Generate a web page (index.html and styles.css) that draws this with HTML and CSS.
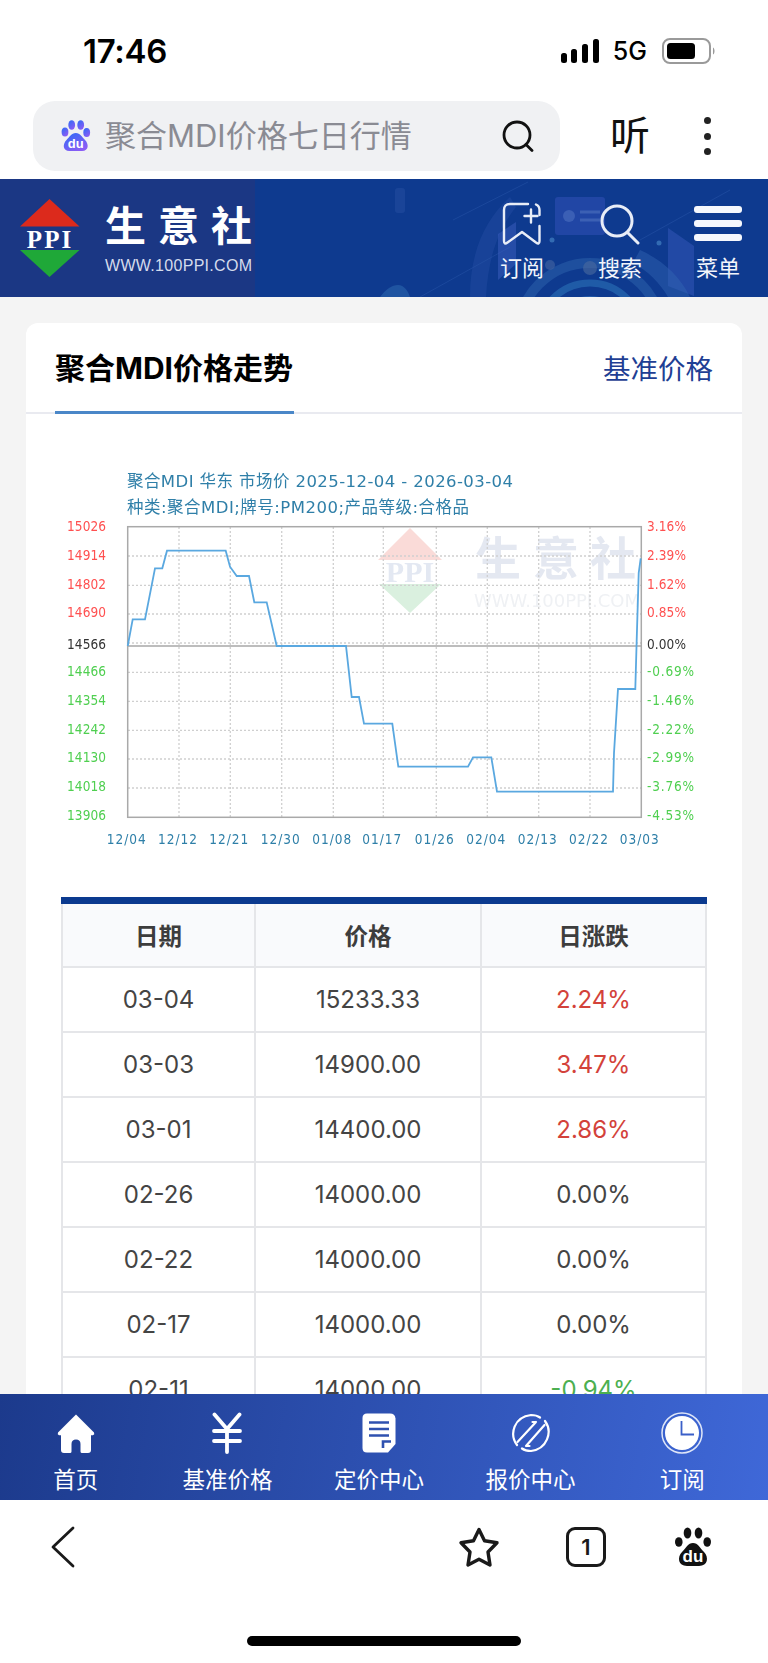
FILE: index.html
```html
<!DOCTYPE html>
<html lang="zh-CN">
<head>
<meta charset="utf-8">
<title>聚合MDI价格走势</title>
<link rel="stylesheet" href="styles.css">
</head>
<body>
<div class="screen">
  <div class="status">
    <span class="time">17:46</span>
    <div class="status-right">
      <svg class="signal" width="38" height="24" viewBox="0 0 38 24"><rect x="0" y="14" width="6" height="10" rx="2.5"/><rect x="10" y="10" width="6" height="14" rx="2.5"/><rect x="21" y="5" width="6" height="19" rx="2.5"/><rect x="32" y="0" width="6" height="24" rx="2.5"/></svg>
      <span class="net">5G</span>
      <svg class="battery" width="54" height="26" viewBox="0 0 54 26"><rect x="1" y="1" width="47" height="24" rx="7" fill="none" stroke="#9a9a9a" stroke-width="2"/><rect x="5" y="5" width="28" height="16" rx="3.5" fill="#000"/><path d="M51 9.500c2 1 2 6 0 7z" fill="#9a9a9a"/></svg>
    </div>
  </div>

  <div class="browser-bar">
    <div class="search-box">
      <svg class="paw" width="30" height="32" viewBox="0 0 30 32">
        <defs><linearGradient id="pawFill" x1="0" y1="0" x2="0.6" y2="1"><stop offset="0" stop-color="#2b6cf6"/><stop offset="1" stop-color="#8a5cf5"/></linearGradient></defs>
        <g fill="url(#pawFill)"><ellipse cx="4" cy="12" rx="3.400" ry="4.500"/><ellipse cx="10.700" cy="5" rx="3.400" ry="4.800"/><ellipse cx="19.700" cy="5" rx="3.400" ry="4.800"/><ellipse cx="25.700" cy="12.500" rx="3.400" ry="4.500"/><path d="M14.800 13c4.500 0 6.200 4 9.200 7 4 4 4 11-3 11H8.500c-7 0-7-7-3-11 3-3 4.800-7 9.300-7z"/></g>
        <text x="14.800" y="28" class="paw-du">du</text>
      </svg>
      <span class="search-text">聚合MDI价格七日行情</span>
      <svg class="search-glass" width="32" height="32" viewBox="0 0 32 32" fill="none" stroke="#111" stroke-width="2.800" stroke-linecap="round"><circle cx="15" cy="15" r="13"/><path d="M24 24.500l6 6"/></svg>
    </div>
    <span class="listen">听</span>
    <div class="dots"><i></i><i></i><i></i></div>
  </div>

  <header class="site-header">
    <svg class="tech" width="388" height="118" viewBox="380 179 388 118" fill="none">
      <rect x="395" y="188" width="10" height="25" rx="3" fill="#2c56a6" opacity=".4"/>
      <path d="M453 220l75-38M420 297l90-50M640 240l90-50" stroke="#2f5cb0" stroke-width="1" opacity=".4"/>
      <rect x="555" y="197" width="50" height="38" rx="3" fill="#2f4fb4" opacity=".6"/>
      <circle cx="569" cy="216" r="6" fill="#4d6fc0" opacity=".6"/>
      <path d="M580 212h20M580 220h20" stroke="#5d80c8" stroke-width="3" opacity=".45"/>
      <path d="M470 297c0-40 12-75 40-100l6 10c-20 25-28 55-30 90z" fill="#2a54a8" opacity=".35"/>
      <path d="M498 234l18-12v42l-18 16z" fill="#3c5ec0" opacity=".5"/>
      <path d="M668 228l26 18v50l-26-10z" fill="#3c5ec0" opacity=".45"/>
      <circle cx="590" cy="335" r="72" stroke="#2e63ae" stroke-width="10" opacity=".5"/>
      <circle cx="590" cy="335" r="52" stroke="#2c72b8" stroke-width="7" opacity=".6"/>
      <circle cx="590" cy="335" r="36" stroke="#3a7cc4" stroke-width="6" opacity=".5"/>
      <path d="M640 250c22 10 40 26 50 47h-22c-8-14-20-26-35-34z" fill="#3465b4" opacity=".45"/>
      <path d="M380 297c6-8 12-12 18-12 6 0 10 6 12 12z" fill="#2c66ae" opacity=".6"/>
      <circle cx="550" cy="265" r="5" fill="#3d5f9e" opacity=".7"/><circle cx="590" cy="268" r="7" fill="#4b6a9e" opacity=".6"/>
      <circle cx="552" cy="240" r="2.500" fill="#3c78bc" opacity=".8"/><circle cx="659" cy="243" r="2.500" fill="#3c78bc" opacity=".8"/>
    </svg>
    <div class="brand">
      <svg class="brand-mark" width="60" height="79" viewBox="0 0 60 79">
        <path d="M29.500 0L59.500 27.500H0z" fill="#dc2a1c"/>
        <text x="30" y="48.500" class="ppi">PPI</text>
        <path d="M0 51h59.500L29.500 78z" fill="#1fa838"/>
      </svg>
      <div class="brand-text">
        <span class="brand-name">生意社</span>
        <span class="brand-url">WWW.100PPI.COM</span>
      </div>
    </div>
    <nav class="site-nav">
      <div class="site-nav-item nav-sub">
        <svg width="40" height="44" viewBox="0 0 40 44" fill="none" stroke="#e8edf7" stroke-width="2.400" stroke-linecap="round" stroke-linejoin="round"><path d="M26 2H8Q2 2 2 8V39q0 4 3.500 1.500L20 30l14 10.500q3.500 2.500 3.500-1.500V24M37.500 13V8Q37.500 4 34 2.500"/><path d="M29 7.500v13M22.500 14h13"/></svg>
        <span>订阅</span>
      </div>
      <div class="site-nav-item nav-find">
        <svg width="40" height="41" viewBox="0 0 40 41" fill="none" stroke="#e8edf7" stroke-width="3" stroke-linecap="round"><circle cx="17" cy="17" r="15"/><path d="M28 29l10 10"/></svg>
        <span>搜索</span>
      </div>
      <div class="site-nav-item nav-menu">
        <div class="burger"><i></i><i></i><i></i></div>
        <span>菜单</span>
      </div>
    </nav>
  </header>

  <main class="content">
    <section class="card">
      <div class="card-head">
        <h1 class="card-title">聚合MDI价格走势</h1>
        <a class="card-link">基准价格</a>
      </div>

      <svg class="chart" width="716" height="483" viewBox="26 414 716 483">
        <g class="wm">
          <path d="M410 528l32 32h-64z" fill="#fadbd8"/>
          <path d="M379 584h62l-31 29z" fill="#daf0df"/>
          <text x="410" y="582" class="wm-ppi">PPI</text>
          <text x="475" y="575" class="wm-name">生</text>
          <text x="533" y="575" class="wm-name">意</text>
          <text x="590" y="575" class="wm-name">社</text>
          <text x="474" y="607" class="wm-url" textLength="166">WWW.100PPI.COM</text>
        </g>
        <text x="127" y="487" class="chart-title" textLength="386">聚合MDI 华东 市场价 2025-12-04 - 2026-03-04</text>
        <text x="127" y="513" class="chart-title" textLength="342">种类:聚合MDI;牌号:PM200;产品等级:合格品</text>

        <g class="grid">
          <path d="M179 527V817M230.300 527V817M281.700 527V817M333.300 527V817M383.300 527V817M436.300 527V817M487.300 527V817M538.700 527V817M590 527V817"/>
          <path d="M128 556H641M128 585.300H641M128 614H641M128 643H641M128 672.300H641M128 701.300H641M128 730.300H641M128 759H641M128 788H641"/>
        </g>
        <path class="zero" d="M128 646H641"/>
        <rect class="frame" x="127.700" y="526.700" width="513.600" height="290.600"/>
        <polyline class="trend" points="127.700,646 132.700,619.300 145,619.300 155,568.300 162.300,568.300 167,550.700 225.700,550.700 230,566.700 236.700,576 249,576 254.300,602.300 266.700,602.300 276.700,646 346,646 351.700,697 359,697 364,723.700 392.300,723.700 398.300,766.700 468,766.700 473,757.300 491.300,757.300 497,791.700 613,791.700 614,753 618,689 635.300,689 636.700,640 638.700,573 640.700,558.300"/>

        <g class="ax ax-up">
          <text x="67" y="531" textLength="39">15026</text><text x="67" y="559.700" textLength="39">14914</text><text x="67" y="588.700" textLength="39">14802</text><text x="67" y="617.300" textLength="39">14690</text>
          <text x="647" y="531" textLength="39">3.16%</text><text x="647" y="559.700" textLength="39">2.39%</text><text x="647" y="588.700" textLength="39">1.62%</text><text x="647" y="617.300" textLength="39">0.85%</text>
        </g>
        <g class="ax ax-flat">
          <text x="67" y="649" textLength="39">14566</text>
          <text x="647" y="649" textLength="39">0.00%</text>
        </g>
        <g class="ax ax-down">
          <text x="67" y="675.700" textLength="39">14466</text><text x="67" y="704.700" textLength="39">14354</text><text x="67" y="733.700" textLength="39">14242</text><text x="67" y="762.300" textLength="39">14130</text><text x="67" y="791.300" textLength="39">14018</text><text x="67" y="820.300" textLength="39">13906</text>
          <text x="647" y="675.700" textLength="47">-0.69%</text><text x="647" y="704.700" textLength="47">-1.46%</text><text x="647" y="733.700" textLength="47">-2.22%</text><text x="647" y="762.300" textLength="47">-2.99%</text><text x="647" y="791.300" textLength="47">-3.76%</text><text x="647" y="820.300" textLength="47">-4.53%</text>
        </g>
        <g class="ax ax-date">
          <text x="106.700" y="843.500" textLength="39">12/04</text><text x="158" y="843.500" textLength="39">12/12</text><text x="209.300" y="843.500" textLength="39">12/21</text><text x="260.700" y="843.500" textLength="39">12/30</text><text x="312.300" y="843.500" textLength="39">01/08</text><text x="362.300" y="843.500" textLength="39">01/17</text><text x="414.700" y="843.500" textLength="39">01/26</text><text x="466.300" y="843.500" textLength="39">02/04</text><text x="517.700" y="843.500" textLength="39">02/13</text><text x="569" y="843.500" textLength="39">02/22</text><text x="619.700" y="843.500" textLength="39">03/03</text>
        </g>
      </svg>

      <table class="prices">
        <colgroup><col class="c1"><col class="c2"><col class="c3"></colgroup>
        <thead><tr><th>日期</th><th>价格</th><th>日涨跌</th></tr></thead>
        <tbody>
          <tr><td>03-04</td><td>15233.33</td><td class="up">2.24%</td></tr>
          <tr><td>03-03</td><td>14900.00</td><td class="up">3.47%</td></tr>
          <tr><td>03-01</td><td>14400.00</td><td class="up">2.86%</td></tr>
          <tr><td>02-26</td><td>14000.00</td><td>0.00%</td></tr>
          <tr><td>02-22</td><td>14000.00</td><td>0.00%</td></tr>
          <tr><td>02-17</td><td>14000.00</td><td>0.00%</td></tr>
          <tr><td>02-11</td><td>14000.00</td><td class="down">-0.94%</td></tr>
        </tbody>
      </table>
    </section>
  </main>

  <nav class="tabbar">
    <div class="tab">
      <svg width="38" height="42" viewBox="0 0 38 42"><path fill="#fff" d="M19 2.500L37 20.500q1 2-1 2.800h-2V38q0 3-3 3H25q-1.500 0-1.500-1.500V32q0-4.500-4.500-4.500T14.500 32v7.500Q14.500 41 13 41H7q-3 0-3-3V23.300H2q-2-.8-1-2.800z"/></svg>
      <span>首页</span>
    </div>
    <div class="tab">
      <svg width="30" height="42" viewBox="0 0 30 42" fill="none" stroke="#fff" stroke-width="3.800" stroke-linecap="round"><path d="M2.500 2.500L15 17 27.500 2.500M2 19h26M2 29h26M15 17v23"/></svg>
      <span>基准价格</span>
    </div>
    <div class="tab">
      <svg width="34" height="42" viewBox="0 0 34 42"><path fill="#fff" d="M5 1.500H28q5 0 5.500 5V32L26 40.500H5q-4.500 0-4.500-4.500V6Q.5 1.500 5 1.500z"/><path d="M7 10.500h20M7 17h20M7 23.500h20" stroke="#2f51b0" stroke-width="2.600"/><path d="M21 36v-6.500h8" fill="none" stroke="#2f51b0" stroke-width="2.600"/></svg>
      <span>定价中心</span>
    </div>
    <div class="tab">
      <svg width="38" height="42" viewBox="0 0 38 42" fill="none" stroke="#fff" stroke-width="2.200" stroke-linecap="round"><path d="M5 33C-3 22 2 5 19 3c4 0 7 1 9 2.500M33 9c8 11 2 28-14 30-4 0-7-1-9-2.500"/><path d="M5.500 30L24 10M24 10h-3.500M14 34L32.500 13M14 34h3.500"/></svg>
      <span>报价中心</span>
    </div>
    <div class="tab">
      <svg width="42" height="42" viewBox="0 0 42 42"><circle cx="21" cy="21" r="20" fill="none" stroke="#dfe6f8" stroke-width="1.500"/><circle cx="21" cy="21" r="17" fill="#fff"/><path d="M20.500 9v13.500H33" fill="none" stroke="#3a5fc8" stroke-width="1.800"/></svg>
      <span>订阅</span>
    </div>
  </nav>

  <div class="toolbar">
    <div class="tool-row">
      <svg width="24" height="42" viewBox="0 0 24 42" fill="none" stroke="#1a1a1a" stroke-width="2.800" stroke-linecap="round" stroke-linejoin="round"><path d="M22 2L2 21l20 19"/></svg>
      <div class="tool-group">
        <svg width="42" height="41" viewBox="0 0 41 41" fill="none" stroke="#1a1a1a" stroke-width="3.400" stroke-linejoin="round"><path d="M20.500 2.500l5.500 11.200 12.500 2-9 9.300 2 13-11-5.700-11 5.700 2-13-9-9.300 12.500-2z"/></svg>
        <div class="tab-count">1</div>
        <svg width="36" height="40" viewBox="0 0 36 40">
          <g fill="#111"><ellipse cx="3.800" cy="15" rx="3.800" ry="4.800"/><ellipse cx="12.500" cy="6" rx="3.800" ry="5.500"/><ellipse cx="23.500" cy="6" rx="3.800" ry="5.500"/><ellipse cx="32.200" cy="15" rx="3.800" ry="4.800"/><path d="M18 16c5 0 7 5 11 9 5 5 4 14-5 14H12c-9 0-10-9-5-14 4-4 6-9 11-9z"/></g>
          <text x="18" y="35" class="paw-du paw-du-lg">du</text>
        </svg>
      </div>
    </div>
    <div class="home-bar"></div>
  </div>
</div>
</body>
</html>
```

FILE: styles.css
```css
* { box-sizing: border-box; }
html, body { margin: 0; padding: 0; background: #fff; }
body { font-family: Inter, "Noto Sans CJK SC", sans-serif; }
i { display: block; }
svg { display: block; flex: none; }

.screen { width: 768px; height: 1663px; display: flex; flex-direction: column; overflow: hidden; background: #fff; }

/* status bar */
.status { height: 101px; flex: none; padding: 33px 52px 32px 83px; display: flex; align-items: center; justify-content: space-between; }
.time { font-size: 33px; font-weight: 600; color: #000; line-height: 36px; letter-spacing: -.3px; }
.status-right { display: flex; align-items: center; }
.signal { fill: #000; margin-right: 14px; }
.net { font-size: 25px; font-weight: 500; line-height: 30px; margin-right: 15px; color: #000; }

/* browser address bar */
.browser-bar { height: 78px; flex: none; padding: 0 0 8px 33px; display: flex; align-items: center; }
.search-box { width: 527px; height: 70px; border-radius: 22px; background: #f0f1f3; display: flex; align-items: center; padding: 0 26px 0 28px; }
.paw-du { fill: #fff; font: 700 13px "Liberation Sans", sans-serif; text-anchor: middle; }
.paw-du-lg { font-size: 17px; }
.search-text { font-size: 31px; color: #8a8b93; margin: 0 0 5px 14px; flex: 1; white-space: nowrap; }
.listen { font-size: 40px; font-weight: 400; margin-left: 50px; color: #111; line-height: 46px; }
.dots { margin-left: 54px; display: flex; flex-direction: column; gap: 8.500px; }
.dots i { width: 7px; height: 7px; border-radius: 50%; background: #222; }

/* site header */
.site-header { position: relative; height: 118px; flex: none; background: #0e3a8f; display: flex; justify-content: space-between; overflow: hidden; }
.tech { position: absolute; right: 0; top: 0; }
.brand { width: 255px; background: #1b3784; display: flex; padding: 20px 0 0 20px; position: relative; }
.ppi { fill: #fff; font: 700 25px "Liberation Serif", serif; text-anchor: middle; letter-spacing: 2px; }
.brand-text { margin-left: 25px; padding-top: 3px; display: flex; flex-direction: column; align-items: flex-start; }
.brand-name { font-size: 41px; font-weight: 700; color: #fff; line-height: 48px; letter-spacing: 12px; white-space: nowrap; }
.brand-url { font: 16px "Liberation Sans", sans-serif; color: #d4dcec; line-height: 18px; margin-top: 7px; white-space: nowrap; letter-spacing: .3px; }
.site-nav { position: relative; display: flex; }
.site-nav-item { display: flex; flex-direction: column; align-items: center; color: #f2f5fb; font-size: 22px; line-height: 30px; padding-top: 23px; }
.site-nav-item span { margin-top: auto; margin-bottom: 14px; }
.nav-sub { width: 60px; margin-right: 38px; }
.nav-find { width: 60px; margin-right: 38px; padding-top: 25px; }
.nav-menu { width: 60px; margin-right: 20px; padding-top: 27px; }
.burger { width: 48px; display: flex; flex-direction: column; gap: 7.500px; }
.burger i { height: 6.500px; border-radius: 3px; background: #f6f8fd; }

/* content */
.content { flex: 1 1 0; min-height: 0; overflow: hidden; background: #f4f4f4; padding: 26px 26px 0; }
.card { background: #fff; border-radius: 12px 12px 0 0; }
.card-head { height: 91px; display: flex; justify-content: space-between; align-items: center; padding: 0 29px; border-bottom: 2px solid #e9eaf0; }
.card-title { margin: 0 0 -2px; align-self: flex-end; height: 89px; width: 239px; line-height: 86px; font-size: 30px; font-weight: 700; color: #000; border-bottom: 3px solid #4a87c8; white-space: nowrap; }
.card-link { font-size: 27.500px; color: #1f3f94; margin-bottom: 2px; }

/* chart */
.chart { filter: blur(.35px); }
.chart text { font-family: "DejaVu Sans", "Noto Sans CJK SC", sans-serif; }
.chart-title { font-size: 16.500px; fill: #2f7fa8; }
.grid { fill: none; stroke: #cfcfcf; stroke-width: 1.300; stroke-dasharray: 2 2; }
.zero { stroke: #bdbdbd; stroke-width: 2; fill: none; }
.frame { fill: none; stroke: #a9a9a9; stroke-width: 1.500; }
.trend { fill: none; stroke: #5aa8e0; stroke-width: 1.800; }
.chart .ax text { font-family: "DejaVu Sans Condensed", "Liberation Sans", sans-serif; font-size: 13.500px; }
.ax-up { fill: #ff5050; }
.ax-flat { fill: #333; }
.ax-down { fill: #4fcf50; }
.ax-date { fill: #2e7fa8; }
.chart .wm-name { font-size: 46px; font-weight: 700; fill: #e4e8f1; }
.chart .wm-ppi { font: 700 30px "Liberation Serif", serif; fill: #e3e8f2; text-anchor: middle; }
.chart .wm-url { font-size: 18px; fill: #eff1f4; }

/* table */
.prices { width: 644px; margin-left: 35px; table-layout: fixed; border-collapse: collapse; border-top: 7px solid #0b3a8f; color: #444; }
.c1 { width: 193px; }
.c2 { width: 226px; }
.c3 { width: 225px; }
.prices th, .prices td { border: 2px solid #e5e6e9; text-align: center; height: 65px; padding: 0; }
.prices thead th { border-top: 0; height: 66px; background: #f9fafc; font-size: 23.500px; font-weight: 600; color: #3d3d3d; }
.prices td { font-size: 24px; font-weight: 400; }
.prices .up { color: #d3423a; }
.prices .down { color: #4caf50; }

/* bottom tabs */
.tabbar { height: 106px; flex: none; padding: 18px 10px 0 0; display: grid; grid-template-columns: repeat(5, 1fr); background: linear-gradient(100deg, #1c3a8c 0%, #3f68d8 100%); }
.tab { display: flex; flex-direction: column; align-items: center; color: #fff; font-size: 22.500px; line-height: 30px; }
.tab span { margin-top: 11px; }

/* browser toolbar */
.toolbar { flex: none; height: 163px; padding-top: 26px; }
.tool-row { display: flex; justify-content: space-between; align-items: center; height: 42px; padding: 0 57px 0 51px; }
.tool-group { display: flex; align-items: center; gap: 66px; }
.tab-count { width: 40px; height: 40px; margin-right: 3px; border: 3px solid #1a1a1a; border-radius: 9px; display: flex; align-items: center; justify-content: center; font-size: 22px; font-weight: 600; color: #1a1a1a; }
.home-bar { width: 274px; height: 10px; border-radius: 5px; background: #000; margin: 68px auto 0; }
```
